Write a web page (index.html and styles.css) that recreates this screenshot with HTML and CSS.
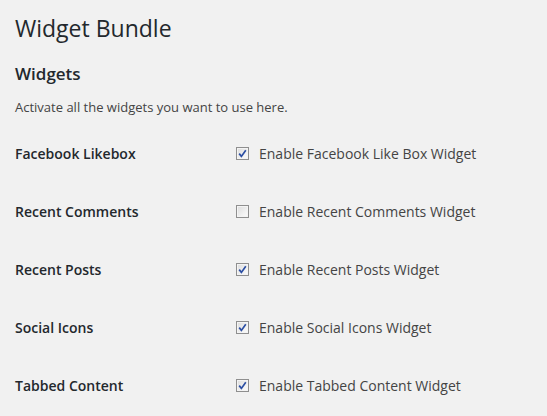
FILE: index.html
```html
<!DOCTYPE html>
<html>
<head>
<meta charset="utf-8">
<link rel="stylesheet" href="styles.css">
</head>
<body>
<div class="wrap">
  <h1 class="title">Widget Bundle</h1>
  <h2 class="section">Widgets</h2>
  <p class="desc">Activate all the widgets you want to use here.</p>
  <div class="rows">
    <div class="th">Facebook Likebox</div>
    <div class="td"><span class="cb checked"><svg viewBox="0 0 9 9" width="9" height="9"><path d="M1.2 4.6 L3.4 7.4 L7.8 1.2" fill="none" stroke="#2b4ea3" stroke-width="1.7"/></svg></span>Enable Facebook Like Box Widget</div>
    <div class="th">Recent Comments</div>
    <div class="td"><span class="cb"></span>Enable Recent Comments Widget</div>
    <div class="th">Recent Posts</div>
    <div class="td"><span class="cb checked"><svg viewBox="0 0 9 9" width="9" height="9"><path d="M1.2 4.6 L3.4 7.4 L7.8 1.2" fill="none" stroke="#2b4ea3" stroke-width="1.7"/></svg></span>Enable Recent Posts Widget</div>
    <div class="th">Social Icons</div>
    <div class="td"><span class="cb checked"><svg viewBox="0 0 9 9" width="9" height="9"><path d="M1.2 4.6 L3.4 7.4 L7.8 1.2" fill="none" stroke="#2b4ea3" stroke-width="1.7"/></svg></span>Enable Social Icons Widget</div>
    <div class="th">Tabbed Content</div>
    <div class="td"><span class="cb checked"><svg viewBox="0 0 9 9" width="9" height="9"><path d="M1.2 4.6 L3.4 7.4 L7.8 1.2" fill="none" stroke="#2b4ea3" stroke-width="1.7"/></svg></span>Enable Tabbed Content Widget</div>
  </div>
</div>
</body>
</html>
```
FILE: styles.css
```css
html, body {
  margin: 0;
  padding: 0;
  background: #f1f1f1;
}
body {
  font-family: "Open Sans", "Liberation Sans", sans-serif;
  color: #444;
  font-size: 13px;
}
.wrap {
  padding-left: 15px;
}
.title {
  margin: 0;
  padding-top: 14px;
  font-size: 23px;
  font-weight: 400;
  line-height: 29px;
  color: #23282d;
}
.section {
  margin: 20px 0 0;
  font-size: 17px;
  font-weight: 600;
  line-height: 22px;
  color: #23282d;
}
.desc {
  margin: 13px 0 0;
  font-size: 13px;
  line-height: 19.5px;
  color: #444;
}
.rows {
  display: grid;
  grid-template-columns: 221px 1fr;
  row-gap: 38px;
  margin-top: 26px;
  font-size: 14px;
  line-height: 20px;
}
.th {
  font-weight: 600;
  color: #23282d;
}
.td {
  display: flex;
  align-items: center;
  color: #444;
}
.cb {
  box-sizing: border-box;
  width: 13px;
  height: 13px;
  margin-right: 10px;
  border: 1px solid #8f8f8f;
  background: linear-gradient(135deg, #dcdcdc 0%, #f4f4f4 70%, #fbfbfb 100%);
  box-shadow: inset 0 0 0 1px #f4f4f4;
  display: inline-flex;
  align-items: center;
  justify-content: center;
  position: relative;
  top: 0;
}
.cb svg {
  display: block;
}
```
